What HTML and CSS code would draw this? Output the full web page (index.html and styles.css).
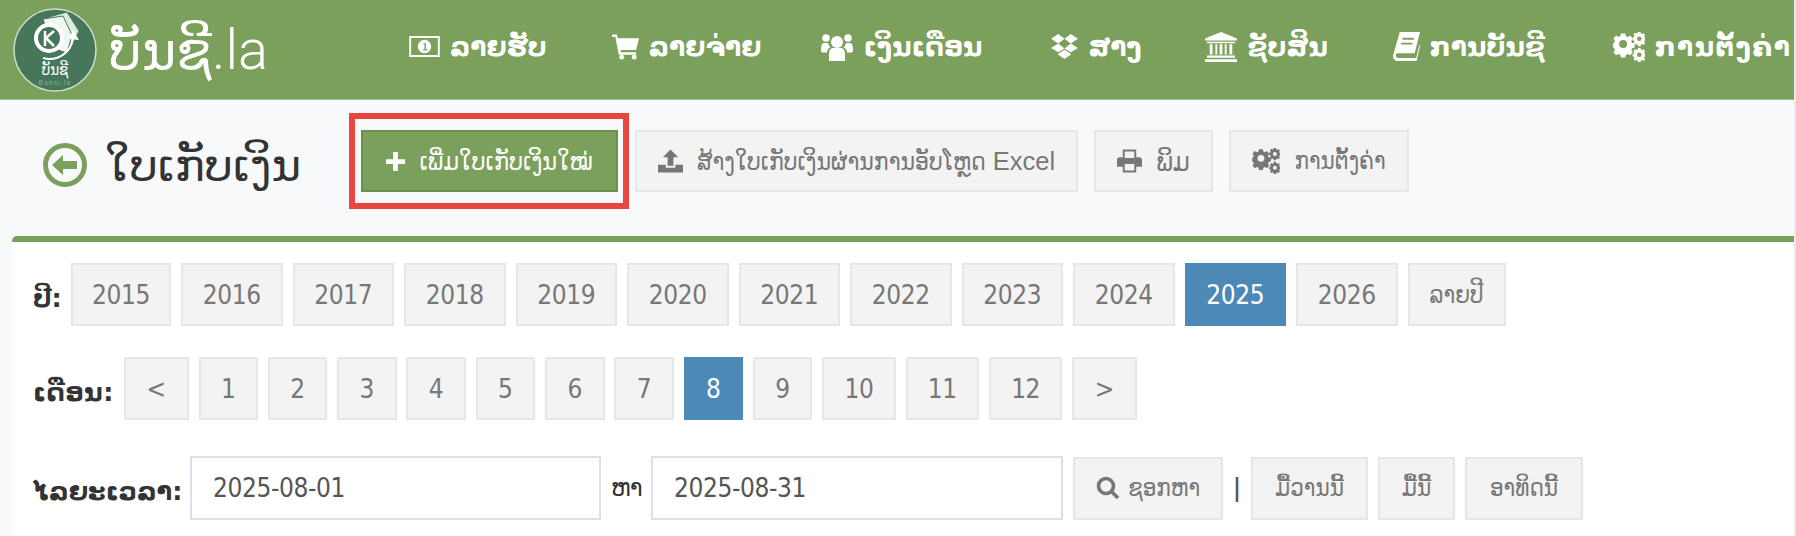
FILE: index.html
```html
<!DOCTYPE html>
<html lang="lo">
<head>
  <meta charset="UTF-8">
  <title>ໃບເກັບເງິນ - ບັນຊີ.la</title>
  <link rel="stylesheet" href="styles.css">
</head>
<body>
  <svg class="defs" width="0" height="0">
    <symbol id="i-cogs" viewBox="0 0 32 30">
      <path fill="currentColor" fill-rule="evenodd" d="M9 5h5l.7 3 2 1 2.800-1.500 3 3.400-1.700 2.600.8 2.100 3 .8v4.600l-3 .8-.8 2.100 1.700 2.600-3 3.400-2.800-1.500-2 1-.7 3H9l-.7-3-2-1-2.800 1.500-3-3.400 1.700-2.600-.8-2.100-1.400-.8v-4.600l1.400-.8.800-2.100-1.700-2.600 3-3.400L6.300 9l2-1zM11.500 12.500a4.500 4.500 0 1 0 0 9 4.500 4.500 0 0 0 0-9z" transform="translate(0 -3) scale(.88)"/>
      <path fill="currentColor" fill-rule="evenodd" d="M25 0h2.600l.4 1.600 1.200.5 1.400-.8 1.400 1.700-.8 1.400.4 1.100 1.400.5v2.200l-1.400.5-.4 1.100.8 1.400-1.400 1.700-1.400-.8-1.200.5-.4 1.600H25l-.4-1.600-1.200-.5-1.400.8-1.400-1.700.8-1.400-.4-1.100-1.400-.5V5.500l1.400-.5.400-1.100-.8-1.400 1.400-1.700 1.400.8 1.200-.5zM26.300 4.500a2.300 2.300 0 1 0 0 4.600 2.300 2.300 0 0 0 0-4.600z"/>
      <path fill="currentColor" fill-rule="evenodd" d="M25 16h2.600l.4 1.600 1.200.5 1.400-.8 1.400 1.700-.8 1.400.4 1.100 1.400.5v2.200l-1.400.5-.4 1.100.8 1.400-1.400 1.700-1.400-.8-1.200.5-.4 1.600H25l-.4-1.600-1.200-.5-1.400.8-1.400-1.700.8-1.400-.4-1.100-1.400-.5v-2.200l1.400-.5.400-1.100-.8-1.400 1.400-1.700 1.400.8 1.200-.5zM26.300 20.500a2.300 2.300 0 1 0 0 4.600 2.300 2.300 0 0 0 0-4.600z"/>
    </symbol>
  </svg>

  <header class="topbar">
    <a class="brand">
      <svg class="brand-logo" viewBox="0 0 84 84">
        <circle cx="42" cy="42" r="41" fill="#47775a" stroke="#cfdccb" stroke-width="1.500"/>
        <path d="M36 9l18-5 12 19-7 14-14-6z" fill="#dfe9df" stroke="#47775a"/>
        <path d="M30 11l20-3 9 19-5 18-15-5z" fill="#f2f6f2" stroke="#47775a"/>
        <circle cx="36" cy="30" r="15" fill="#fff"/>
        <circle cx="36" cy="30" r="11" fill="#47775a"/>
        <path d="M32 23v15M41 23l-8 7 8 8" fill="none" stroke="#fff" stroke-width="2.500"/>
        <path d="M30 50c14 4 28-5 30-20" fill="none" stroke="#fff" stroke-width="2"/>
        <path d="M60 22l6 10-10-1z" fill="#fff"/>
        <text class="brand-logo-text" x="42" y="67" text-anchor="middle">ບັນຊີ</text>
        <text class="brand-logo-sub" x="42" y="77" text-anchor="middle">Bansi.la</text>
      </svg>
      <span class="brand-name">ບັນຊີ<span class="brand-tld">.la</span></span>
    </a>
    <nav class="menu">
      <a class="menu-item menu-income">
        <svg class="ico ico-money" viewBox="0 0 32 22"><path fill="currentColor" fill-rule="evenodd" d="M0 0h32v22H0zM2 2v18h28V2zM16 4a7 7 0 1 1 0 14 7 7 0 0 1 0-14zM15 7.500v1.300h1v5.200h-1.500v1.300h4.500V14h-1.500V7.500z"/></svg>
        ລາຍຮັບ
      </a>
      <a class="menu-item menu-expense">
        <svg class="ico ico-cart" viewBox="0 0 28 26"><path fill="currentColor" d="M0 0h5l1 4h22l-3 12H9l.5 2.500H25V21H7L3.500 2.500H0z"/><circle cx="10" cy="23.500" r="2.500" fill="currentColor"/><circle cx="23" cy="23.500" r="2.500" fill="currentColor"/></svg>
        ລາຍຈ່າຍ
      </a>
      <a class="menu-item menu-salary">
        <svg class="ico ico-users" viewBox="0 0 32 28"><circle cx="16" cy="9" r="6" fill="currentColor"/><circle cx="5" cy="5" r="3.800" fill="currentColor"/><circle cx="27" cy="5" r="3.800" fill="currentColor"/><path fill="currentColor" d="M8 28v-7c0-4 2-6 4-6h8c2 0 4 2 4 6v7zM0 17c0-5 1-7 3-7h4c.5 2 1 3 2.500 4.500C7 15.500 6 17 6 19.500H1.500C.5 19.500 0 18.500 0 17zM32 17c0-5-1-7-3-7h-4c-.5 2-1 3-2.500 4.500 2.500 1 3.500 2.500 3.500 5h4.500c1 0 1.500-1 1.500-2.500z"/></svg>
        ເງິນເດືອນ
      </a>
      <a class="menu-item menu-stock">
        <svg class="ico ico-dropbox" viewBox="0 0 28 26"><path fill="currentColor" d="M7.500 0L14 5 7.500 9.800 0 5zM20.500 0L28 5l-7.500 4.800L14 5zM0 14.600l7.500-4.800L14 15l-6.500 4zM28 14.600l-7.500-4.800L14 15l6.500 4zM7.500 20.500l6.500-4.200 6.500 4.200v1L14 26l-6.500-4.500z"/></svg>
        ສາງ
      </a>
      <a class="menu-item menu-assets">
        <svg class="ico ico-bank" viewBox="0 0 34 32"><path fill="currentColor" d="M17 0l17 7v2H0V7zM2 10.500h30V12H2zM5 13h3v11H5zM11 13h2v11h-2zM15.500 13h3v11h-3zM21 13h2v11h-2zM26 13h3v11h-3zM2 25h30v2.500H2zM0 29h34v3H0z"/></svg>
        ຊັບສິນ
      </a>
      <a class="menu-item menu-account">
        <svg class="ico ico-book" viewBox="0 0 28 30"><path fill="currentColor" d="M7 0h21l-5.500 22H5c-2 0-2.500 2-2 3s1.500 2 3 2h18l3.500-14 .5 1.500L24.500 30H5c-3 0-5-2.500-5-5.500z"/><path fill="#7aa05c" d="M10 6h12l-.5 2H9.500zM8.500 11h12l-.5 2H8z"/></svg>
        ການບັນຊີ
      </a>
      <a class="menu-item menu-config">
        <svg class="ico ico-cogs"><use href="#i-cogs"/></svg>
        ການຕັ້ງຄ່າ
      </a>
    </nav>
  </header>

  <main class="page">
    <div class="page-head">
      <h1 class="page-title">
        <svg class="back-ico" viewBox="0 0 44 44"><circle cx="22" cy="22" r="19.500" fill="none" stroke="#7aa05c" stroke-width="5"/><path fill="#7aa05c" d="M9 22l11-10v6h14v8H20v6z"/></svg>
        <span class="page-title-text">ໃບເກັບເງິນ</span>
      </h1>
      <div class="mark-box">
        <a class="btn btn-add">
          <svg class="btn-ico ico-plus" viewBox="0 0 20 20"><path fill="currentColor" d="M7.500 0h5v7.500H20v5h-7.500V20h-5v-7.500H0v-5h7.500z"/></svg>
          ເພີ່ມໃບເກັບເງິນໃໝ່
        </a>
      </div>
      <a class="btn btn-excel">
        <svg class="btn-ico ico-upload" viewBox="0 0 26 24"><path fill="currentColor" d="M13 0l8 8h-5v9h-6V8H5zM0 16h8v3h10v-3h8v8H0z"/></svg>
        <span>ສ້າງໃບເກັບເງິນຜ່ານການອັບໂຫຼດ <span class="latin">Excel</span></span>
      </a>
      <a class="btn btn-print">
        <svg class="btn-ico ico-print" viewBox="0 0 26 24"><path fill="currentColor" fill-rule="evenodd" d="M6 0h14v8h3c2 0 3 1 3 3v7h-6v6H6v-6H0v-7c0-2 1-3 3-3h3zM8 2v7h10V2zM8 15v7h10v-7z"/></svg>
        ພິມ
      </a>
      <a class="btn btn-config">
        <svg class="btn-ico ico-cogs"><use href="#i-cogs"/></svg>
        ການຕັ້ງຄ່າ
      </a>
    </div>

    <section class="panel">
      <div class="filter-row row-year">
        <b class="filter-label label-year">ປີ:</b>
        <a class="btn btn-year btn-first">2015</a>
        <a class="btn btn-year">2016</a>
        <a class="btn btn-year">2017</a>
        <a class="btn btn-year">2018</a>
        <a class="btn btn-year">2019</a>
        <a class="btn btn-year">2020</a>
        <a class="btn btn-year">2021</a>
        <a class="btn btn-year">2022</a>
        <a class="btn btn-year">2023</a>
        <a class="btn btn-year">2024</a>
        <a class="btn btn-year active">2025</a>
        <a class="btn btn-year">2026</a>
        <a class="btn btn-year btn-all">ລາຍປີ</a>
      </div>
      <div class="filter-row row-month">
        <b class="filter-label label-month">ເດືອນ:</b>
        <a class="btn btn-arrow">&lt;</a>
        <a class="btn btn-month">1</a>
        <a class="btn btn-month">2</a>
        <a class="btn btn-month">3</a>
        <a class="btn btn-month">4</a>
        <a class="btn btn-month">5</a>
        <a class="btn btn-month">6</a>
        <a class="btn btn-month">7</a>
        <a class="btn btn-month active">8</a>
        <a class="btn btn-month">9</a>
        <a class="btn btn-month2">10</a>
        <a class="btn btn-month2">11</a>
        <a class="btn btn-month2">12</a>
        <a class="btn btn-arrow">&gt;</a>
      </div>
      <div class="filter-row row-date">
        <b class="filter-label label-date">ໄລຍະເວລາ:</b>
        <input class="date-input date-from" type="text" value="2025-08-01">
        <span class="date-to">ຫາ</span>
        <input class="date-input" type="text" value="2025-08-31">
        <a class="btn btn-search">
          <svg class="btn-ico ico-search" viewBox="0 0 24 24"><path fill="none" stroke="currentColor" stroke-width="3.600" d="M10 2.500a7.500 7.500 0 1 0 0 15 7.500 7.500 0 0 0 0-15zM15.500 15.500L22 22"/></svg>
          ຊອກຫາ
        </a>
        <span class="sep">|</span>
        <a class="btn btn-range r-yesterday">ມື້ວານນີ້</a>
        <a class="btn btn-range r-today">ມື້ນີ້</a>
        <a class="btn btn-range r-week">ອາທິດນີ້</a>
      </div>
    </section>
  </main>
</body>
</html>
```

FILE: styles.css
```css
* {
  box-sizing: border-box;
}
html, body {
  height: 536px;
  overflow: hidden;
}
body {
  margin: 0;
  background: #f8f9fb;
  border-right: 2px solid #e9e9ee;
  color: #555;
  font-family: "DejaVu Sans Condensed", "DejaVu Sans", sans-serif;
  font-size: 26px;
}
.defs {
  position: absolute;
}

/* top bar */
.topbar {
  height: 100px;
  background: #7aa05c;
  border-bottom: 1px solid #a3bd8e;
  color: #fff;
  display: flex;
  align-items: center;
}
.brand {
  display: flex;
  align-items: center;
  gap: 12px;
  width: 409px;
  padding-left: 13px;
  flex: none;
}
.brand-logo {
  width: 84px;
  height: 84px;
}
.brand-logo-text {
  font-size: 15px;
  fill: #fff;
}
.brand-logo-sub {
  font-size: 7px;
  fill: #8fb09a;
  letter-spacing: 1px;
}
.brand-name {
  font-family: "DejaVu Sans", sans-serif;
  font-size: 52px;
  font-weight: 200;
}
.brand-tld {
  font-family: Roboto, sans-serif;
  font-size: 56px;
  font-weight: 300;
}
.menu {
  display: flex;
  align-items: center;
  margin-bottom: 6px;
  font-family: "DejaVu Sans", sans-serif;
  font-size: 26.500px;
  font-weight: bold;
}
.menu-item {
  display: flex;
  align-items: center;
  gap: 10px;
  white-space: nowrap;
}
.menu-expense { margin-left: 65px; }
.menu-salary { margin-left: 60px; }
.menu-stock { margin-left: 69px; }
.menu-assets { margin-left: 62px; }
.menu-account { margin-left: 65px; }
.menu-config { margin-left: 68px; letter-spacing: 1.500px; }
.ico {
  display: block;
  height: 26px;
  flex: none;
}
.ico-money { width: 31px; height: 21px; }
.ico-cart { width: 27px; height: 26px; }
.ico-users { width: 32px; height: 28px; }
.ico-dropbox { width: 27px; height: 25px; }
.ico-bank { width: 34px; height: 30px; }
.ico-book { width: 27px; height: 29px; }
.ico-cogs { width: 32px; height: 30px; }

/* page head */
.page-head {
  display: flex;
  align-items: center;
  height: 122px;
  margin-bottom: 14px;
  padding-left: 43px;
}
.page-title {
  display: flex;
  align-items: center;
  gap: 18px;
  width: 306px;
  margin: 8px 0 0;
  font-family: "DejaVu Sans", sans-serif;
  font-size: 45px;
  font-weight: normal;
  color: #333;
}
.back-ico {
  width: 44px;
  height: 44px;
  flex: none;
}
.mark-box {
  border: 6px solid #e8453f;
  padding: 11px 5px 11px 6px;
  margin-right: 6px;
}

/* buttons */
.btn {
  display: flex;
  align-items: center;
  justify-content: center;
  height: 63px;
  background: #f3f3f3;
  border: 2px solid #e6e6e6;
  color: #777;
  white-space: nowrap;
}
.btn-ico {
  display: block;
  flex: none;
}
.btn-add {
  width: 257px;
  height: 62px;
  gap: 14px;
  background: #7aa05c;
  border-color: #6b8f50;
  color: #fff;
  font-size: 25px;
}
.ico-plus { width: 19px; height: 19px; }
.btn-excel {
  width: 443px;
  height: 62px;
  gap: 14px;
  font-size: 24.500px;
}
.latin {
  font-family: "Liberation Sans", sans-serif;
  font-size: 25.500px;
}
.ico-upload { width: 25px; height: 24px; }
.btn-print {
  width: 119px;
  height: 62px;
  margin-left: 16px;
  gap: 14px;
  font-size: 27px;
}
.ico-print { width: 25px; height: 24px; }
.btn-config {
  width: 180px;
  height: 62px;
  margin-left: 16px;
  gap: 14px;
  font-size: 24px;
}
.btn-config .ico-cogs { width: 28px; height: 26px; }

/* filter panel */
.panel {
  height: 300px;
  margin-left: 12px;
  background: #fff;
  border-top: 6px solid #7aa05c;
  border-top-left-radius: 5px;
  padding: 21px 0 0 21px;
}
.filter-row {
  display: flex;
  align-items: center;
  gap: 10px;
  margin-bottom: 31px;
}
.filter-label {
  font-family: "DejaVu Sans", sans-serif;
  font-size: 25.500px;
  color: #333;
  margin-top: 6px;
  white-space: nowrap;
}
.label-year { width: 28px; }
.label-month { width: 81px; letter-spacing: .5px; }
.label-date { width: 147px; }
.btn-year {
  width: 101.500px;
  letter-spacing: -.4px;
}
.btn-first {
  width: 100px;
}
.btn.active {
  background: #4d89b7;
  border-color: #4d89b7;
  color: #fff;
}
.btn-all {
  width: 98px;
  font-size: 24px;
  letter-spacing: 0;
}
.btn-arrow { width: 65px; }
.btn-month { width: 59.500px; }
.btn-month2 { width: 73.500px; letter-spacing: -.4px; }
.row-month {
  gap: 9.800px;
}

.row-date {
  margin-top: 36px;
}
.date-input {
  height: 64px;
  border: 2px solid #dbe1ea;
  background: #fff;
  color: #555;
  font: inherit;
  letter-spacing: -.4px;
  padding: 0 21px;
  width: 412px;
  outline: 0;
}
.date-from {
  width: 411px;
}
.date-to {
  width: 30px;
  font-family: "DejaVu Sans", sans-serif;
  font-size: 24px;
  letter-spacing: -1px;
  color: #333;
  white-space: nowrap;
}
.btn-search {
  width: 150px;
  gap: 8px;
  font-size: 24px;
}
.ico-search { width: 24px; height: 24px; }
.sep {
  width: 8px;
  text-align: center;
  font-size: 24px;
  font-weight: bold;
  color: #555;
}
.btn-range { font-size: 24px; }
.r-yesterday { width: 117px; }
.r-today { width: 77px; }
.r-week { width: 118px; }
```
